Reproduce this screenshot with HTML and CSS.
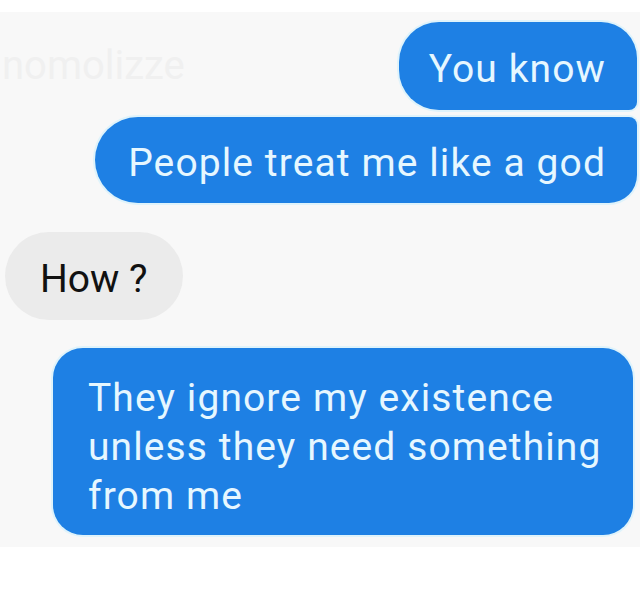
FILE: index.html
```html
<!DOCTYPE html>
<html>
<head>
<meta charset="utf-8"/>
<title>Chat</title>
<link rel="stylesheet" href="styles.css">
</head>
<body>
<div class="thread">
<div class="mark">nomolizze</div>
<div class="msg me first">You know</div>
<div class="msg me last wide">People treat me like a god</div>
<div class="msg them">How ?</div>
<div class="msg me long">They ignore my existence<br>unless they need something<br>from me</div>
</div>
</body>
</html>
```

FILE: styles.css
```css
body {
margin: 0;
background-color: #fff;
}
* {
font-family: Roboto, 'Liberation Sans', sans-serif;
}
.thread {
position: relative;
margin-top: 12px;
height: 535px;
background-color: #f8f8f8;
display: flex;
flex-direction: column;
}
.mark {
position: absolute;
left: 2px;
top: 30px;
font-size: 40px;
color: #f0f0f0;
}
.msg {
font-size: 39px;
box-sizing: border-box;
display: flex;
align-items: center;
}
.me {
align-self: flex-end;
background-color: #1e80e4;
color: #e6f7ff;
letter-spacing: 1.1px;
box-shadow: 0 0 0 2px #dff3fb;
}
.first {
margin-top: 10px;
margin-right: 3px;
height: 88px;
padding: 6px 31px 0 30px;
border-radius: 40px 36px 8px 40px;
}
.wide {
margin-top: 7px;
margin-right: 3px;
height: 86px;
padding: 6px 31px 0 33px;
border-radius: 43px 8px 28px 43px;
}
.them {
align-self: flex-start;
margin-top: 29px;
margin-left: 5px;
height: 88px;
padding: 5px 36px 0 35px;
background-color: #ebebeb;
color: #111;
border-radius: 44px;
}
.long {
margin-top: 28px;
margin-right: 7px;
width: 580px;
height: 187px;
padding: 12px 30px 0 35px;
line-height: 49px;
border-radius: 30px;
}
```
